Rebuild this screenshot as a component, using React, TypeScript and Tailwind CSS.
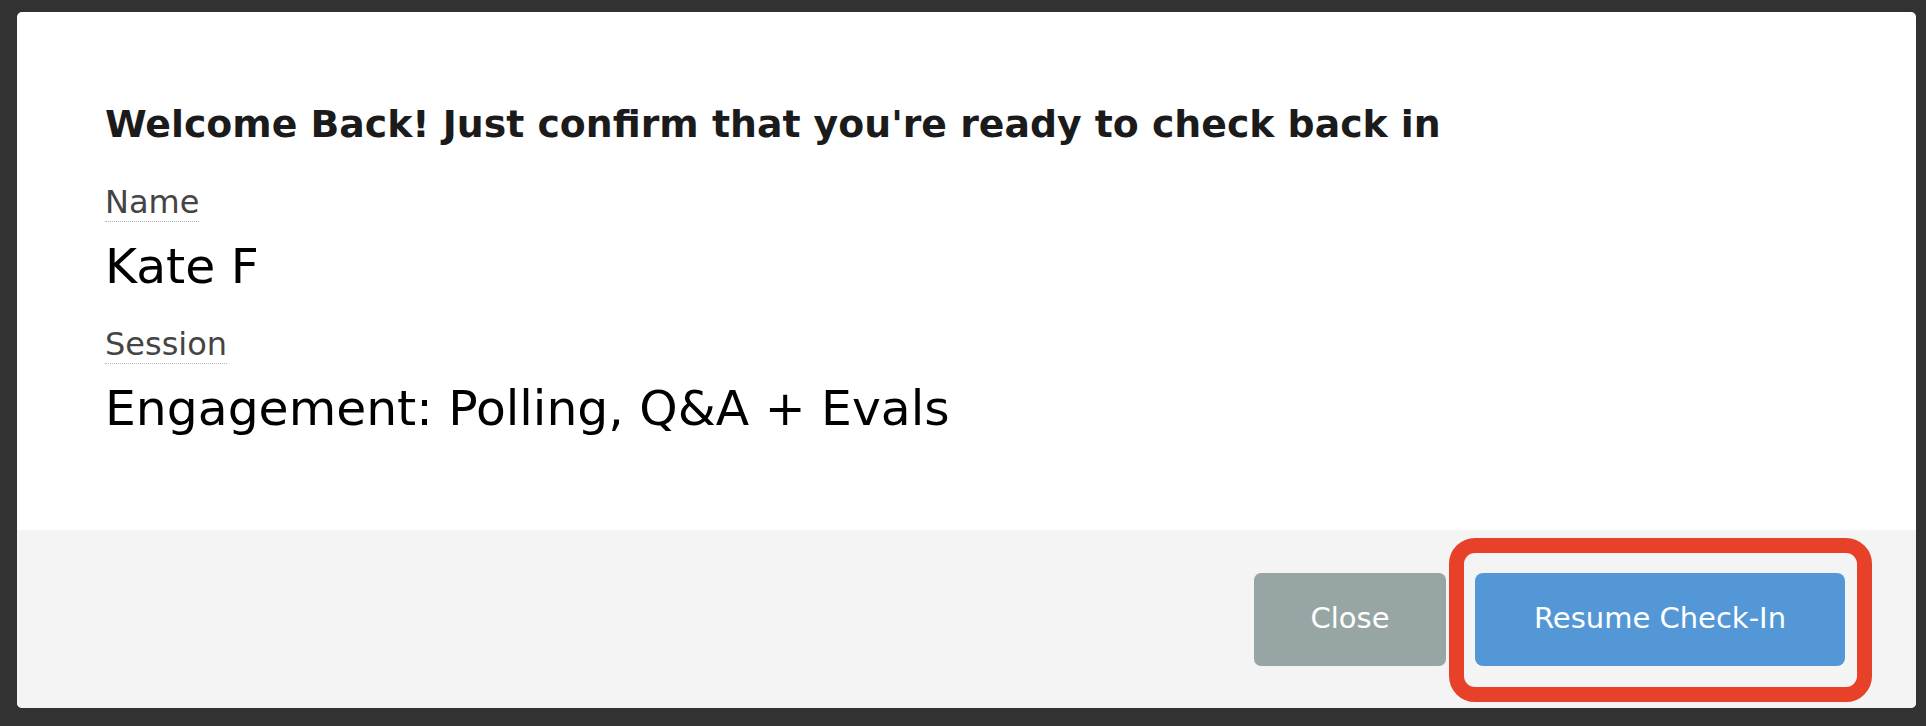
import React from 'react';

const font = { fontFamily: '"DejaVu Sans", Verdana, sans-serif' };

const Field: React.FC<{ label: string; value: string; className?: string }> = ({ label, value, className = '' }) => (
  <div className={className}>
    <span className="inline-block text-[32px] leading-[37px] text-[#444444] border-b border-dotted border-[#b5b5b5]">
      {label}
    </span>
    <div className="text-[48.8px] leading-[56px] text-black mt-[17px]">{value}</div>
  </div>
);

const App: React.FC = () => {
  return (
    <div
      className="h-screen w-full bg-[#323232] pt-[12px] pl-[17px] pr-[10px] pb-[18px]"
      style={font}
    >
      <div className="h-full flex flex-col bg-white rounded-[5px] overflow-hidden">
        <div className="flex-1 pt-[90px] pl-[88px]">
          <h1 className="text-[37.8px] leading-[44px] font-bold text-[#1b1b1b]">
            Welcome Back! Just confirm that you're ready to check back in
          </h1>
          <Field label="Name" value="Kate F" className="mt-[38px]" />
          <Field label="Session" value="Engagement: Polling, Q&A + Evals" className="mt-[31px]" />
        </div>

        <div className="h-[178px] shrink-0 bg-[#f4f4f4] flex items-center justify-end gap-[29px] pr-[71px]">
          <button className="w-[192px] h-[93px] rounded-[7px] bg-[#98a5a5] text-white text-[29px]">
            Close
          </button>
          <div className="relative">
            <button className="w-[370px] h-[93px] rounded-[8px] bg-[#5497d6] text-white text-[29px]">
              Resume Check-In
            </button>
            <div className="absolute -left-[26px] -right-[27px] -top-[35px] -bottom-[36px] border-[15px] border-[#e8412a] rounded-[26px] pointer-events-none" />
          </div>
        </div>
      </div>
    </div>
  );
};

export default App;
